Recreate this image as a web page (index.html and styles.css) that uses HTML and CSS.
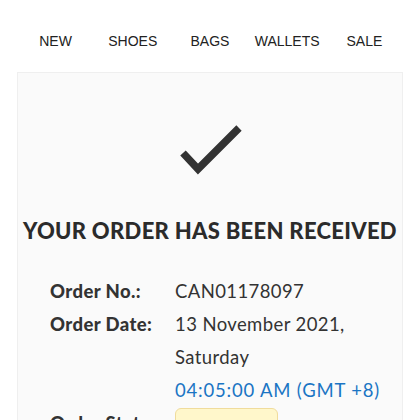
FILE: index.html
```html
<!DOCTYPE html>
<html lang="en">
<head>
    <meta charset="UTF-8">
    <meta name="viewport" content="width=device-width, initial-scale=1.0">
    <title>Order Received</title>
    <link rel="stylesheet" href="styles.css">
</head>
<body>
    <nav class="menu">
        <a href="#">NEW</a>
        <a href="#">SHOES</a>
        <a href="#">BAGS</a>
        <a href="#">WALLETS</a>
        <a href="#">SALE</a>
    </nav>

    <div class="order-box">
        <svg class="check" width="70" height="60" viewBox="0 0 70 60">
            <path d="M8 33 L23 49 L64 8" fill="none" stroke="#333" stroke-width="7.5"/>
        </svg>
        <h1>YOUR ORDER HAS BEEN RECEIVED</h1>

        <div class="details">
            <div class="label">Order No.:</div>
            <div class="value">CAN01178097</div>

            <div class="label">Order Date:</div>
            <div class="value">
                13 November 2021,<br>
                Saturday<br>
                <span class="time">04:05:00 AM (GMT +8)</span>
            </div>

            <div class="label">Order Status:</div>
            <div class="value"><span class="status">Pending</span></div>
        </div>
    </div>
</body>
</html>
```

FILE: styles.css
```css
body {
    margin: 0;
    font-family: Lato, "Open Sans", sans-serif;
    color: #333;
    background-color: #fff;
}
.menu {
    display: grid;
    grid-template-columns: repeat(5, 1fr);
    margin: 0 17px;
    padding: 33px 0 23px;
}
.menu a {
    font-family: "Liberation Sans", Arial, sans-serif;
    font-size: 14px;
    line-height: 16px;
    color: #222;
    text-align: center;
    text-decoration: none;
}
.order-box {
    margin: 0 17px;
    padding: 47px 0 40px;
    border: 1px solid #efefef;
    background-color: #fafafa;
}
.check {
    display: block;
    margin: 0 auto;
}
h1 {
    margin: 38px 0 0;
    font-size: 22px;
    line-height: 26px;
    font-weight: 900;
    letter-spacing: 0.3px;
    text-align: center;
    color: #2b2b2b;
}
.details {
    display: grid;
    grid-template-columns: 125px 1fr;
    margin-top: 31px;
    padding-left: 32px;
    font-size: 18.5px;
    line-height: 33px;
}
.label {
    font-weight: 900;
    letter-spacing: 0.4px;
}
.value {
    letter-spacing: 0.4px;
}
.time {
    color: #1b75c4;
    letter-spacing: 0.8px;
}
.status {
    display: inline-block;
    width: 101px;
    height: 30px;
    margin-top: 1px;
    vertical-align: top;
    border: 1px solid #f0dc9c;
    border-radius: 6px;
    background-color: #fff7cb;
    color: transparent;
}
```
